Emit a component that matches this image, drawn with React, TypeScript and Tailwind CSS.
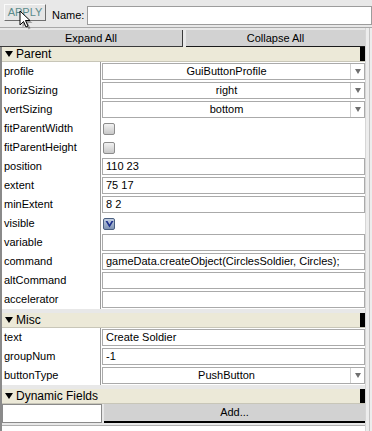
import React from "react";

const font = "font-['Liberation_Sans',Arial,sans-serif]";

function Caret() {
    return (
        <svg width="8" height="6" viewBox="0 0 8 6" className="shrink-0">
            <path d="M0 0 H8 L4 6 Z" fill="#000" />
        </svg>
    );
}

function Header({ title, gap }: { title: string; gap?: boolean }) {
    return (
        <div className={`flex h-[15px] bg-[#ece9d8] border-b border-[#c8c6b8] ${gap ? "mt-[4px]" : ""}`}>
            <div className="flex-1 flex items-center gap-[3px] pl-[3px] text-[12px] leading-none text-black">
                <Caret />
                <span>{title}</span>
            </div>
            <div className="w-[5px] bg-black" />
        </div>
    );
}

function Row({ label, children }: { label: string; children?: React.ReactNode }) {
    return (
        <div className="flex h-[19px]">
            <div className="w-[99px] bg-white border-r border-[#9a9a9a] pl-[2px] flex items-center text-[11px] text-black">
                {label}
            </div>
            <div className="flex-1 flex items-center pl-[1px] bg-white">{children}</div>
        </div>
    );
}

function TextBox({ value }: { value?: string }) {
    return (
        <div className="flex-1 h-[17px] border border-[#aaaaaa] bg-white flex items-center pl-[3px] text-[11px] text-black whitespace-nowrap overflow-hidden">
            {value}
        </div>
    );
}

function Dropdown({ value }: { value: string }) {
    return (
        <div className="flex-1 h-[17px] border border-[#aaaaaa] bg-white flex items-center text-[11px] text-black">
            <div className="flex-1 text-center">{value}</div>
            <div className="w-[14px] h-full border-l border-[#d0d0d0] flex items-center justify-center">
                <svg width="6" height="5" viewBox="0 0 6 5">
                    <path d="M0 0 H6 L3 5 Z" fill="#707070" />
                </svg>
            </div>
        </div>
    );
}

function Check({ checked }: { checked?: boolean }) {
    return (
        <div
            className={`ml-[1px] w-[12px] h-[12px] rounded-[2px] border flex items-center justify-center ${
                checked ? "border-[#4a5f80] bg-gradient-to-b from-[#c4d0e4] to-[#7f93b4]" : "border-[#8c8c8c] bg-gradient-to-b from-[#f2f2f2] to-[#c8c8c8]"
            }`}
        >
            {checked && (
                <svg width="9" height="8" viewBox="0 0 9 8">
                    <path d="M0.5 1 L4.5 7.5 L8.5 1 H6.5 L4.5 4.5 L2.5 1 Z" fill="#1c2f8c" />
                </svg>
            )}
        </div>
    );
}

export default function App() {
    return (
        <div className={`relative w-[372px] h-[431px] overflow-hidden bg-[#e8e8e8] ${font}`}>
            {/* Top bar */}
            <div className="h-[28px] flex items-start border-b border-[#a8a8a8]">
                <button className="mt-[4px] ml-[4px] w-[42px] h-[17px] bg-[#e6e6e6] border border-t-[#fafafa] border-l-[#fafafa] border-r-[#6e6e6e] border-b-[#6e6e6e] text-[11px] leading-none text-[#5c8c8c]">
                    APPLY
                </button>
                <span className="mt-[10px] ml-[6px] text-[11px] leading-none text-black">Name:</span>
                <div className="mt-[6px] ml-[3px] w-[285px] h-[19px] bg-white border border-[#9c9c9c]" />
            </div>

            <div className="flex">
                {/* Main panel */}
                <div className="w-[365px] flex flex-col">
                    <div className="flex gap-[3px] pt-[2px]">
                        <div className="w-[183px] h-[17px] bg-[#d2d2d2] border-b border-r border-[#3a3a3a] flex items-center justify-center text-[11px] text-black">
                            Expand All
                        </div>
                        <div className="flex-1 h-[17px] bg-[#d2d2d2] border-b border-[#1a1a1a] flex items-center justify-center text-[11px] text-black">
                            Collapse All
                        </div>
                    </div>

                    <div className="border-l-2 border-[#8a8a8a] flex flex-col">
                        <Header title="Parent" />
                        <Row label="profile"><Dropdown value="GuiButtonProfile" /></Row>
                        <Row label="horizSizing"><Dropdown value="right" /></Row>
                        <Row label="vertSizing"><Dropdown value="bottom" /></Row>
                        <Row label="fitParentWidth"><Check /></Row>
                        <Row label="fitParentHeight"><Check /></Row>
                        <Row label="position"><TextBox value="110 23" /></Row>
                        <Row label="extent"><TextBox value="75 17" /></Row>
                        <Row label="minExtent"><TextBox value="8 2" /></Row>
                        <Row label="visible"><Check checked /></Row>
                        <Row label="variable"><TextBox /></Row>
                        <Row label="command"><TextBox value="gameData.createObject(CirclesSoldier, Circles);" /></Row>
                        <Row label="altCommand"><TextBox /></Row>
                        <Row label="accelerator"><TextBox /></Row>

                        <Header title="Misc" gap />
                        <Row label="text"><TextBox value="Create Soldier" /></Row>
                        <Row label="groupNum"><TextBox value="-1" /></Row>
                        <Row label="buttonType"><Dropdown value="PushButton" /></Row>

                        <Header title="Dynamic Fields" gap />
                        <div className="flex h-[19px] gap-[2px]">
                            <div className="w-[100px] h-[19px] bg-white border border-[#8a8a8a]" />
                            <div className="flex-1 h-[19px] bg-[#d2d2d2] border-b-2 border-black flex items-center justify-center text-[11px] text-black">
                                Add...
                            </div>
                        </div>
                        <div className="h-[12px] bg-white border-t border-[#b0b0b0] mt-[2px]" />
                    </div>
                </div>

                {/* Scroll strip */}
                <div className="flex-1 bg-[#ededed] border-l border-[#d6d6d6] flex justify-center">
                    <div className="w-px h-[403px] bg-[#c4c4c4]" />
                </div>
            </div>

            {/* Mouse cursor */}
            <svg className="absolute left-[19px] top-[10px]" width="14" height="20" viewBox="0 0 14 20">
                <path d="M2 2 L2 16 L5.5 12.5 L8 18 L10 17 L7.5 11.5 L12 11.5 Z" fill="#000" opacity="0.3" transform="translate(1.5 1.5)" />
                <path d="M1 1 L1 15 L4.5 11.5 L7 17 L9 16 L6.5 10.5 L11 10.5 Z" fill="#fff" stroke="#000" strokeWidth="1" strokeLinejoin="round" />
            </svg>
        </div>
    );
}
